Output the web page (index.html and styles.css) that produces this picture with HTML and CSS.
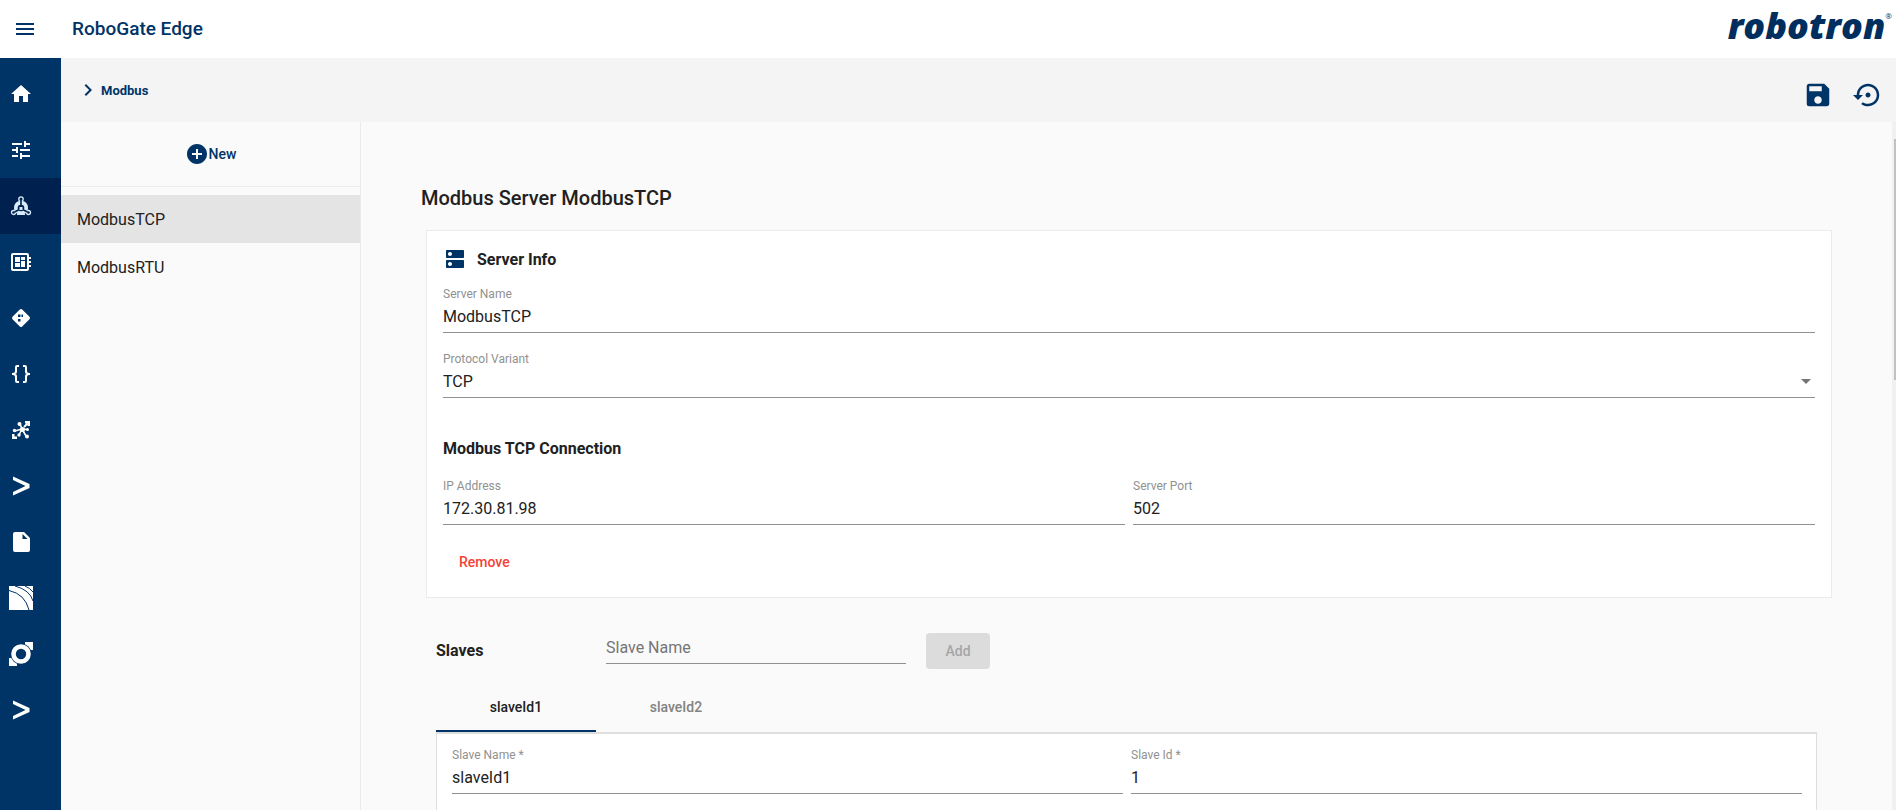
FILE: index.html
```html
<!DOCTYPE html>
<html lang="en">
<head>
<meta charset="utf-8">
<title>RoboGate Edge</title>
<link rel="stylesheet" href="styles.css">
</head>
<body>
<div class="app">
  <header class="topbar">
    <button class="icon-btn menu-btn" type="button" aria-label="Menu">
      <svg class="icon" viewBox="0 0 24 24"><path d="M3 6h18v2H3V6m0 5h18v2H3v-2m0 5h18v2H3v-2z"/></svg>
    </button>
    <h1 class="app-title">RoboGate Edge</h1>
    <div class="logo">robotron<sup class="logo-mark">®</sup></div>
  </header>
  <div class="body">
    <nav class="sidebar" aria-label="Main">
      <a class="nav-item" href="#" aria-label="Home"><svg class="icon" viewBox="0 0 24 24"><path d="M10 20v-6h4v6h5v-8h3L12 3 2 12h3v8z"/></svg></a>
      <a class="nav-item" href="#" aria-label="Settings"><svg class="icon" viewBox="0 0 24 24"><path d="M3 17v2h6v-2H3zM3 5v2h10V5H3zm10 16v-2h8v-2h-8v-2h-2v6h2zM7 9v2H3v2h4v2h2V9H7zm14 4v-2H11v2h10zm-6-4h2V7h4V5h-4V3h-2v6z"/></svg></a>
      <a class="nav-item active" href="#" aria-label="Protocols"><svg class="icon" viewBox="0 0 24 24"><path class="pale" d="M10 7a7 7 0 0 0-5 8l2 4q5 3 10 0l2-4a7 7 0 0 0-5-8z"/><g fill="none" stroke="#d9ebf9" stroke-width="1.300"><circle cx="12" cy="5" r="2.200"/><circle cx="4.500" cy="18.500" r="2"/><circle cx="19.500" cy="18.500" r="2"/></g><path d="M12 5v6M5.500 18l4-2M18.500 18l-4-2" stroke="#002050" stroke-width="1.600"/><circle cx="12" cy="14" r="3.300" fill="#002050"/><path class="pale" d="M10.500 13h3v3h-3zM8 19.500h8V21H8z"/></svg></a>
      <a class="nav-item" href="#" aria-label="Devices"><svg class="icon" viewBox="0 0 24 24"><path d="M22 9V7h-2V5c0-1.100-.9-2-2-2H4c-1.100 0-2 .9-2 2v14c0 1.100.9 2 2 2h14c1.100 0 2-.9 2-2v-2h2v-2h-2v-2h2v-2h-2V9h2zm-4 10H4V5h14v14zM6 13h5v4H6zm6-6h4v3h-4zM6 7h5v5H6zm6 4h4v6h-4z"/></svg></a>
      <a class="nav-item" href="#" aria-label="Routing"><svg class="icon" viewBox="0 0 24 24"><path d="M12 3q.7 0 1.200.5l7.300 7.300q1 1.200 0 2.400l-7.300 7.300q-1.200 1-2.400 0l-7.300-7.300q-1-1.200 0-2.400l7.300-7.300Q11.300 3 12 3z"/><path class="navy" d="M9 8.500h2.500V11H9zM12.500 8.500H14V11h-1.500zM9 13h2.500v2.500H9z"/></svg></a>
      <a class="nav-item" href="#" aria-label="Data"><svg class="icon" viewBox="0 0 24 24"><path d="M8 3a2 2 0 0 0-2 2v4a2 2 0 0 1-2 2H3v2h1a2 2 0 0 1 2 2v4a2 2 0 0 0 2 2h2v-2H8v-5a2 2 0 0 0-2-2 2 2 0 0 0 2-2V5h2V3M16 3a2 2 0 0 1 2 2v4a2 2 0 0 0 2 2h1v2h-1a2 2 0 0 0-2 2v4a2 2 0 0 1-2 2h-2v-2h2v-5a2 2 0 0 1 2-2 2 2 0 0 1-2-2V5h-2V3h2z"/></svg></a>
      <a class="nav-item" href="#" aria-label="Network"><svg class="icon" viewBox="0 0 24 24"><path d="M16 3h5v5h-2.500V5.500H16zM3 16h2.500v2.500H8V21H3z"/><g stroke="#fff" stroke-width="1.600"><path d="M13 11L11 6M13 11l5 .5M13 11l4 7M13 11l-3 6M13 11l-7 2"/></g><circle cx="13.500" cy="11.500" r="2.500"/><circle cx="10.500" cy="6" r="2"/><circle cx="18.500" cy="11.500" r="1.500"/><circle cx="18" cy="18.500" r="2"/><circle cx="10" cy="17" r="1.700"/><circle cx="5.500" cy="12.500" r="1.700"/><path d="M15 9l3.500-3.500" stroke="#fff" stroke-width="2"/></svg></a>
      <a class="nav-item" href="#" aria-label="Console"><svg class="icon" viewBox="0 0 24 24"><path d="M4 2.500l16.500 7.500v4L4 21.500V18l12.500-6L4 6z"/></svg></a>
      <a class="nav-item" href="#" aria-label="Files"><svg class="icon" viewBox="0 0 24 24"><path d="M6 2h9l6 6v12q0 2-2 2H6q-2 0-2-2V4q0-2 2-2z"/><path class="navy" d="M13.500 4l5 5h-5z"/></svg></a>
      <a class="nav-item" href="#" aria-label="Streams"><svg class="icon" viewBox="0 0 24 24"><path d="M0 0h24v24H0z"/><g fill="none" stroke="#003366"><path d="M0 4.500Q16 8 20 24" stroke-width="1"/><path d="M6 0Q21 4 24 15M16 0q5 2 8 6" stroke-width="1"/></g></svg></a>
      <a class="nav-item" href="#" aria-label="Connector"><svg class="icon" viewBox="0 0 24 24"><path d="M16 0h8v8h-8zM0 16h8v8H0z"/><circle cx="12" cy="12" r="10.500" class="navy"/><circle cx="12" cy="12" r="7.500" fill="none" stroke="#fff" stroke-width="4.600"/></svg></a>
      <a class="nav-item" href="#" aria-label="Terminal"><svg class="icon" viewBox="0 0 24 24"><path d="M4 2.500l16.500 7.500v4L4 21.500V18l12.500-6L4 6z"/></svg></a>
    </nav>
    <div class="page">
      <div class="toolbar">
        <nav class="breadcrumb" aria-label="Breadcrumb">
          <svg class="icon" viewBox="0 0 24 24"><path d="M8.590 16.580L13.170 12 8.590 7.410 10 6l6 6-6 6z"/></svg>
          <a class="crumb" href="#">Modbus</a>
        </nav>
        <div class="actions">
          <button class="icon-btn" type="button" aria-label="Save"><svg class="icon-lg" viewBox="0 0 24 24"><path d="M17 3H5a2 2 0 0 0-2 2v14a2 2 0 0 0 2 2h14c1.100 0 2-.9 2-2V7l-4-4zm-5 16c-1.660 0-3-1.340-3-3s1.340-3 3-3 3 1.340 3 3-1.340 3-3 3zm3-10H5V5h10v4z"/></svg></button>
          <button class="icon-btn" type="button" aria-label="Restore"><svg class="icon-lg" viewBox="0 0 24 24"><path d="M14 12c0-1.100-.9-2-2-2s-2 .9-2 2 .9 2 2 2 2-.9 2-2zm-2-9c-4.970 0-9 4.030-9 9H0l4 4 4-4H5c0-3.870 3.130-7 7-7s7 3.130 7 7-3.130 7-7 7c-1.510 0-2.910-.49-4.060-1.300l-1.420 1.440C8.040 20.300 9.940 21 12 21c4.970 0 9-4.030 9-9s-4.030-9-9-9z"/></svg></button>
        </div>
      </div>
      <div class="columns">
        <aside class="list-panel">
          <div class="new-row">
            <button class="new-btn" type="button"><svg class="icon" viewBox="0 0 24 24"><path d="M12 2C6.480 2 2 6.480 2 12s4.480 10 10 10 10-4.480 10-10S17.520 2 12 2zm5 11h-4v4h-2v-4H7v-2h4V7h2v4h4v2z"/></svg>New</button>
          </div>
          <ul class="server-list">
            <li><a class="server selected" href="#">ModbusTCP</a></li>
            <li><a class="server" href="#">ModbusRTU</a></li>
          </ul>
        </aside>
        <main class="content">
          <h2 class="page-title">Modbus Server ModbusTCP</h2>
          <section class="card">
            <div class="card-head">
              <svg class="icon" viewBox="0 0 24 24"><path d="M20 13H4c-.55 0-1 .45-1 1v6c0 .55.45 1 1 1h16c.55 0 1-.45 1-1v-6c0-.55-.45-1-1-1zM7 19c-1.100 0-2-.9-2-2s.9-2 2-2 2 .9 2 2-.9 2-2 2zM20 3H4c-.55 0-1 .45-1 1v6c0 .55.45 1 1 1h16c.55 0 1-.45 1-1V4c0-.55-.45-1-1-1zM7 9c-1.100 0-2-.9-2-2s.9-2 2-2 2 .9 2 2-.9 2-2 2z"/></svg>
              <h3 class="section-title">Server Info</h3>
            </div>
            <div class="stack">
              <div class="field">
                <label class="label" for="server-name">Server Name</label>
                <input class="input" id="server-name" type="text" value="ModbusTCP">
              </div>
              <div class="field">
                <label class="label" for="variant">Protocol Variant</label>
                <select class="input select" id="variant"><option>TCP</option><option>RTU</option></select>
              </div>
            </div>
            <h3 class="section-title connection">Modbus TCP Connection</h3>
            <div class="pair">
              <div class="field">
                <label class="label" for="ip">IP Address</label>
                <input class="input" id="ip" type="text" value="172.30.81.98">
              </div>
              <div class="field">
                <label class="label" for="port">Server Port</label>
                <input class="input" id="port" type="text" value="502">
              </div>
            </div>
            <button class="btn remove" type="button">Remove</button>
          </section>
          <section class="slaves">
            <div class="slave-add">
              <h3 class="section-title slaves-title">Slaves</h3>
              <input class="input new-slave" type="text" placeholder="Slave Name" aria-label="Slave Name">
              <button class="btn add" type="button" disabled>Add</button>
            </div>
            <div class="tabs" role="tablist">
              <button class="tab current" type="button" role="tab" aria-selected="true">slaveId1</button>
              <button class="tab" type="button" role="tab" aria-selected="false">slaveId2</button>
            </div>
            <div class="tab-body" role="tabpanel">
              <div class="pair">
                <div class="field">
                  <label class="label" for="slave-name">Slave Name *</label>
                  <input class="input" id="slave-name" type="text" value="slaveId1">
                </div>
                <div class="field">
                  <label class="label" for="slave-id">Slave Id *</label>
                  <input class="input" id="slave-id" type="text" value="1">
                </div>
              </div>
            </div>
          </section>
        </main>
        <div class="scroll-track"><div class="scroll-thumb"></div></div>
      </div>
    </div>
  </div>
</div>
</body>
</html>
```
FILE: styles.css
```css
* { box-sizing: border-box; }
body, h1, h2, h3, ul { margin: 0; padding: 0; }
body {
  font-family: Roboto, "Liberation Sans", sans-serif;
  font-size: 16px;
  color: #212121;
  background: #fafafa;
}
button, input, select { font-family: inherit; }
button { border: 0; padding: 0; background: none; cursor: pointer; }
a { color: inherit; text-decoration: none; }
svg { display: block; fill: currentColor; }
.icon { width: 24px; height: 24px; }
.icon-lg { width: 30px; height: 30px; }
.icon-btn { color: #003366; }

.app { display: flex; flex-direction: column; height: 100vh; overflow: hidden; }
.topbar {
  display: flex;
  align-items: center;
  flex: none;
  height: 58px;
  padding: 0 4px 0 13px;
  background: #fff;
  color: #003366;
}
.app-title { margin-left: 35px; font-size: 19px; font-weight: 500; line-height: 28px; }
.logo {
  display: flex;
  align-items: flex-start;
  margin-left: auto;
  margin-bottom: 6px;
  font-family: "Open Sans", "Noto Sans", sans-serif;
  font-size: 36px;
  font-style: italic;
  font-weight: 800;
  line-height: 40px;
  color: #002f5f;
}
.logo-mark { font-size: 8px; font-weight: 400; line-height: 20px; }

.body { display: flex; flex: 1; min-height: 0; }
.sidebar { flex: none; width: 61px; padding-top: 8px; background: #003366; color: #fff; }
.nav-item { display: flex; align-items: center; height: 56px; padding-left: 9px; }
.nav-item.active { background: #002050; }
.pale { fill: #d9ebf9; }
.navy { fill: #003366; }

.page { display: flex; flex-direction: column; flex: 1; min-width: 0; }
.toolbar {
  display: flex;
  justify-content: space-between;
  flex: none;
  height: 64px;
  padding: 22px 13px 0 15px;
  background: #f4f4f4;
  color: #003366;
}
.breadcrumb { display: flex; align-items: center; gap: 1px; height: 20px; }
.crumb { font-size: 13px; font-weight: 700; }
.actions { display: flex; align-items: flex-start; gap: 20px; }

.columns { display: flex; flex: 1; min-height: 0; }
.list-panel { flex: none; width: 300px; border-right: 1px solid #ebebeb; }
.new-row { display: flex; justify-content: center; align-items: center; height: 65px; border-bottom: 1px solid #ebebeb; }
.new-btn { display: flex; align-items: center; font-size: 14px; font-weight: 500; color: #003366; }
.server-list { padding-top: 8px; list-style: none; }
.server { display: block; padding: 2px 16px 0; line-height: 46px; }
.server.selected { background: #e4e4e4; }

.content { display: flex; flex-direction: column; flex: 1; min-width: 0; padding: 62px 60px 0; }
.page-title { font-size: 20px; font-weight: 500; line-height: 28px; }
.card { margin: 18px 0 0 5px; padding: 16px; border: 1px solid #ebebeb; background: #fff; }
.card-head { display: flex; align-items: center; gap: 10px; margin-bottom: 15px; }
.card-head .icon { color: #003366; }
.section-title { padding-top: 2px; font-size: 16px; font-weight: 700; line-height: 22px; }
.connection { margin: 38px 0 18px; }
.stack { display: grid; gap: 18px; }
.pair { display: grid; grid-template-columns: 1fr 1fr; gap: 8px; }
.field { display: flex; flex-direction: column; min-width: 0; }
.label { font-size: 12px; line-height: 16px; color: #919191; }
.input {
  width: 100%;
  height: 31px;
  padding: 0 0 2px;
  border: 0;
  border-bottom: 1px solid #919191;
  border-radius: 0;
  background: transparent;
  font-size: 16px;
  color: #212121;
  outline: 0;
}
.input::placeholder { color: #757575; opacity: 1; }
.select {
  appearance: none;
  background: url("data:image/svg+xml,%3Csvg xmlns='http://www.w3.org/2000/svg' viewBox='0 0 10 5'%3E%3Cpath fill='%23757575' d='M0 0h10L5 5z'/%3E%3C/svg%3E") no-repeat right 4px top 12px / 10px 5px;
}
.btn { height: 36px; padding: 0 16px; border-radius: 4px; font-size: 14px; font-weight: 500; }
.remove { display: block; margin: 19px 0 1px; color: #f44336; }

.slaves { display: flex; flex-direction: column; flex: 1; margin: 35px 15px 0; }
.slave-add { display: flex; align-items: flex-start; }
.slaves-title { width: 170px; padding: 0; line-height: 36px; }
.new-slave { width: 300px; margin-right: 20px; }
.add { width: 64px; background: #dcdcdc; color: #a6a6a6; }
.tabs { display: flex; margin-top: 15px; }
.tab {
  width: 160px;
  height: 48px;
  border-bottom: 2px solid transparent;
  font-size: 14px;
  font-weight: 500;
  color: #828282;
}
.tab.current { border-bottom-color: #003366; color: #212121; }
.tab-body { flex: 1; padding: 13px 14px 0 15px; border: 1px solid #dedede; border-width: 2px 1px 0; background: #fff; }

.scroll-track { flex: none; width: 4px; padding: 17px 0 0 2px; background: #f1f1f1; }
.scroll-thumb { height: 241px; background: #c1c1c1; }
```
